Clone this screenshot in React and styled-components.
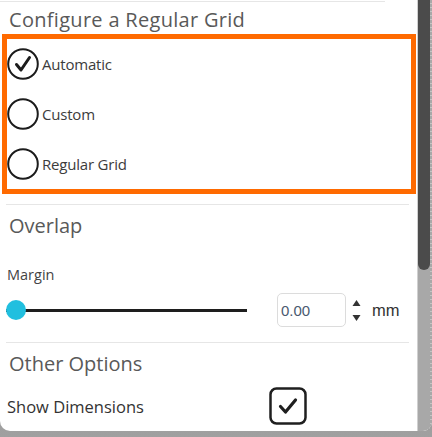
import styled, { createGlobalStyle } from 'styled-components';

const GlobalStyle = createGlobalStyle`
  html, body {
    margin: 0;
    padding: 0;
    background: #8e8e8e;
  }
  body {
    font-family: "Open Sans", "Noto Sans", sans-serif;
  }
`;

const Frame = styled.div`
  width: 432px;
  height: 437px;
  overflow: hidden;
  background: linear-gradient(#7a7a7a, #a0a0a0);
`;

const Panel = styled.div`
  display: flex;
  height: 431px;
  background: #fff;
  border-radius: 0 0 9px 10px;
  overflow: hidden;
`;

const Content = styled.div`
  width: 417px;
  display: flex;
  flex-direction: column;
  padding-top: 1px;
`;

const Rule = styled.div`
  height: 1px;
  background: #e6e6e6;
  margin: ${p => p.$top || 0}px ${p => p.$right || 0}px 0 ${p => p.$left || 0}px;
`;

const Heading = styled.div`
  font-size: 20px;
  line-height: 28px;
  color: #595959;
  padding-left: 9px;
  margin-top: ${p => p.$top}px;
  letter-spacing: ${p => p.$spacing || 0}px;
`;

const OptionBox = styled.div`
  margin: 0 1px 0 2px;
  border: 5px solid #ff6a00;
  display: flex;
  flex-direction: column;
`;

const OptionRow = styled.label`
  display: flex;
  align-items: center;
  gap: 3px;
  height: 50px;
  font-size: 15px;
  letter-spacing: -0.2px;
  color: #3c3c3c;
`;

const SmallLabel = styled.div`
  font-size: 14.5px;
  line-height: 20px;
  color: #444;
  padding-left: 7px;
  margin-top: ${p => p.$top}px;
`;

const SliderRow = styled.div`
  display: flex;
  align-items: center;
  height: 36px;
  margin-top: 7px;
  padding-left: 6px;
`;

const Track = styled.div`
  position: relative;
  width: 241px;
  height: 3px;
  background: #1e1e1e;
  display: flex;
  align-items: center;
`;

const Thumb = styled.div`
  position: absolute;
  left: 0;
  width: 20px;
  height: 20px;
  border-radius: 50%;
  background: #21bfdf;
`;

const NumberBox = styled.div`
  width: 69px;
  height: 34px;
  margin-left: 30px;
  border: 1px solid #dcdcdc;
  border-radius: 5px;
  display: flex;
  align-items: center;
  padding-left: 3px;
  box-sizing: border-box;
  font-family: "Liberation Sans", Arial, sans-serif;
  font-size: 15px;
  color: #4a5a70;
`;

const Spinner = styled.div`
  display: flex;
  flex-direction: column;
  gap: 7px;
  margin-left: 6px;
`;

const Unit = styled.span`
  font-family: "Liberation Sans", Arial, sans-serif;
  font-size: 16.5px;
  color: #333;
  margin-left: 11px;
`;

const CheckRow = styled.div`
  display: flex;
  align-items: center;
  justify-content: space-between;
  width: 300px;
  margin-top: 9px;
  padding-left: 7px;
  font-size: 16.5px;
  color: #333;
`;

const ScrollTrack = styled.div`
  width: 15px;
  border-left: 1px solid #d0d0d0;
  border-radius: 0 0 8px 0;
  box-sizing: border-box;
  background-image: repeating-linear-gradient(#a8a8a8 0 3px, #c4c4c4 3px 4px);
  background-size: 2px 100%;
  background-repeat: no-repeat;
  background-position: right top;
  background-color: #a8a8a8;
`;

const ScrollThumb = styled.div`
  height: 270px;
  background: #4b4b4b;
  border-radius: 0 0 7px 7px;
  margin-right: 2px;
`;

const Radio = ({ checked }) => (
  <svg width="32" height="32" viewBox="0 0 32 32">
    <circle cx="16" cy="16" r="14.8" fill="none" stroke="#1c1c1c" strokeWidth="2" />
    {checked && (
      <path d="M9.5 16.5 L14 22 L22.5 9.5" fill="none" stroke="#1c1c1c" strokeWidth="3" strokeLinecap="round" strokeLinejoin="round" />
    )}
  </svg>
);

const Checkbox = () => (
  <svg width="38" height="38" viewBox="0 0 38 38">
    <rect x="1.5" y="1.5" width="35" height="35" rx="6" fill="none" stroke="#1f1f1f" strokeWidth="2.5" />
    <path d="M11.5 19.5 L16.5 25 L26.5 13" fill="none" stroke="#1f1f1f" strokeWidth="3.2" strokeLinecap="round" strokeLinejoin="round" />
  </svg>
);

const Arrow = ({ down }) => (
  <svg width="9" height="8" viewBox="0 0 9 8">
    <path d={down ? 'M0.5 1 L8.5 1 L4.5 7 Z' : 'M0.5 7 L8.5 7 L4.5 1 Z'} fill="#333" />
  </svg>
);

const options = [
  { label: 'Automatic', checked: true },
  { label: 'Custom' },
  { label: 'Regular Grid' },
];

export default function App() {
  return (
    <>
      <GlobalStyle />
      <Frame>
        <Panel>
          <Content>
            <Rule $right={32} />
            <Heading $top={4} $spacing={0.3}>Configure a Regular Grid</Heading>
            <OptionBox>
              {options.map(o => (
                <OptionRow key={o.label}>
                  <Radio checked={o.checked} />
                  {o.label}
                </OptionRow>
              ))}
            </OptionBox>
            <Rule $top={10} $left={6} $right={8} />
            <Heading $top={7}>Overlap</Heading>
            <SmallLabel $top={25}>Margin</SmallLabel>
            <SliderRow>
              <Track>
                <Thumb />
              </Track>
              <NumberBox>0.00</NumberBox>
              <Spinner>
                <Arrow />
                <Arrow down />
              </Spinner>
              <Unit>mm</Unit>
            </SliderRow>
            <Rule $top={14} $left={6} $right={8} />
            <Heading $top={7}>Other Options</Heading>
            <CheckRow>
              Show Dimensions
              <Checkbox />
            </CheckRow>
          </Content>
          <ScrollTrack>
            <ScrollThumb />
          </ScrollTrack>
        </Panel>
      </Frame>
    </>
  );
}
